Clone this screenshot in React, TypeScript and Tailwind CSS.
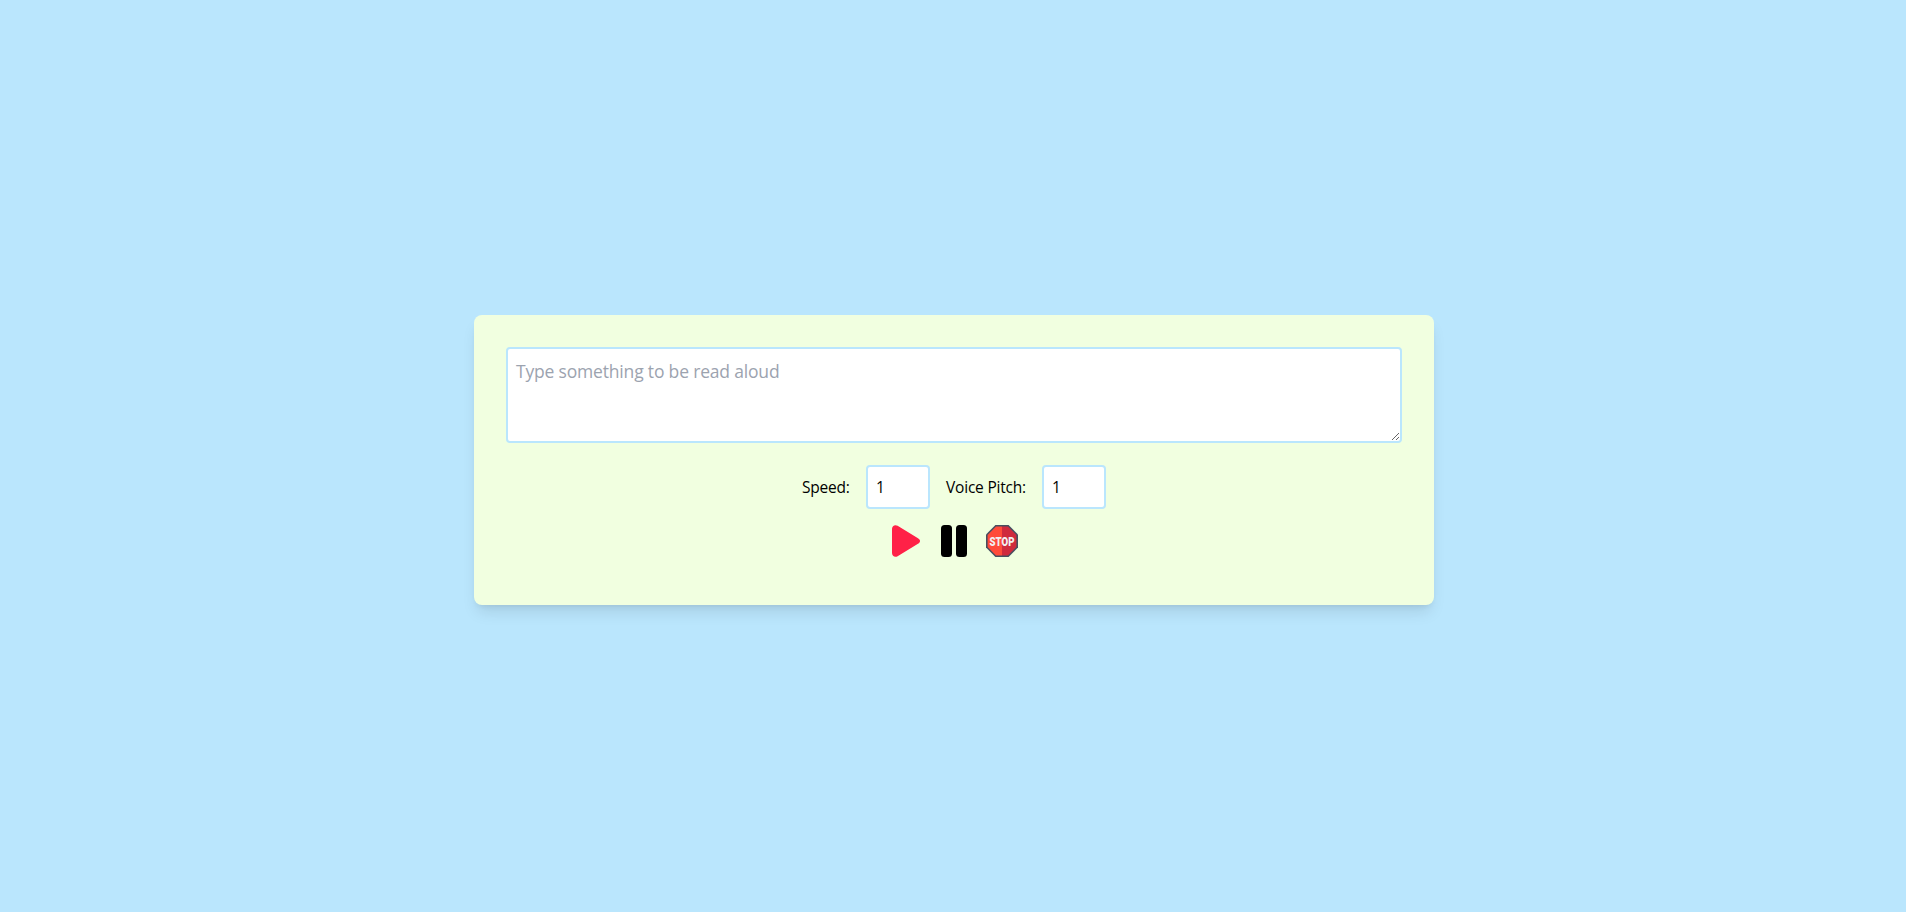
import { useState } from "react";

function PlayIcon() {
  return (
    <svg viewBox="0 0 32 32" className="size-8">
      <path
        d="M2 4C2 .8 5-.8 7.600.8l20.400 12.400c2.700 1.600 2.700 4 0 5.600L7.600 31.200C5 32.800 2 31.200 2 28Z"
        fill="#ff2147"
      />
    </svg>
  );
}

function PauseIcon() {
  return (
    <svg viewBox="0 0 32 32" className="size-8">
      <rect x="3" y="0" width="11" height="32" rx="3.500" />
      <rect x="18" y="0" width="11" height="32" rx="3.500" />
    </svg>
  );
}

function StopIcon() {
  return (
    <svg viewBox="0 0 32 32" className="size-8 overflow-visible">
      <path d="M9.400 0h13.200L32 9.400v13.200L22.600 32H9.400L0 22.600V9.400Z" fill="#474f60" />
      <path d="M10 1.600h6v28.800h-6L1.600 22V10Z" fill="#ff4b3a" />
      <path d="M16 1.600h6L30.400 10v12L22 30.400h-6Z" fill="#cf2a3d" />
      <text
        transform="translate(16 20.700) scale(0.74 1)"
        textAnchor="middle"
        fontFamily="Roboto, sans-serif"
        fontWeight="900"
        fontSize="13"
        fill="#f2eff2"
      >
        STOP
      </text>
    </svg>
  );
}

const fieldClass =
  "h-11 w-16 rounded border-2 border-[#bae6fd] bg-white p-2 text-[15.5px] leading-6 text-black outline-none";

export default function App() {
  const [text, setText] = useState("");
  const [speed, setSpeed] = useState("1");
  const [pitch, setPitch] = useState("1");

  return (
    <main className="flex min-h-screen items-center justify-center bg-[#bae6fd] pt-2 pl-0.5 font-['Open_Sans','Noto_Sans',sans-serif] text-black">
      <section className="flex w-[960px] flex-col items-center rounded-lg bg-[#f1ffe0] px-8 pt-8 pb-12 shadow-lg">
        <textarea
          value={text}
          onChange={(e) => setText(e.target.value)}
          placeholder="Type something to be read aloud"
          className="mb-[22px] h-24 w-full resize rounded border-2 border-[#bae6fd] bg-white p-2 text-[17.5px] leading-7 tracking-[-0.18px] outline-none placeholder:text-[#9ca3af]"
        />
        <div className="mb-4 flex items-center gap-4">
          <label htmlFor="speed" className="w-12 text-[15.5px] leading-6 tracking-[-0.2px] whitespace-nowrap">
            Speed:
          </label>
          <input id="speed" value={speed} onChange={(e) => setSpeed(e.target.value)} className={fieldClass} />
          <label htmlFor="pitch" className="w-20 text-[15.5px] leading-6 tracking-[-0.2px] whitespace-nowrap">
            Voice Pitch:
          </label>
          <input id="pitch" value={pitch} onChange={(e) => setPitch(e.target.value)} className={fieldClass} />
        </div>
        <div className="flex gap-4">
          <button aria-label="Play">
            <PlayIcon />
          </button>
          <button aria-label="Pause">
            <PauseIcon />
          </button>
          <button aria-label="Stop">
            <StopIcon />
          </button>
        </div>
      </section>
    </main>
  );
}
